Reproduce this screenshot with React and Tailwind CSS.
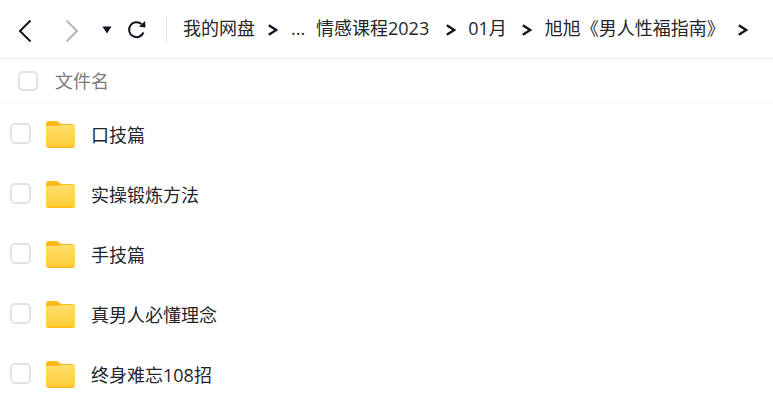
const font = { fontFamily: '"Open Sans", "Noto Sans CJK SC", sans-serif' };

function Chevron() {
  return (
    <svg width="10" height="12" viewBox="0 0 10 12" className="shrink-0 mt-[2px]" fill="none">
      <path d="M0.8 1.2 L8.2 6 L0.8 10.8" stroke="#11131f" strokeWidth="2.3" />
    </svg>
  );
}

function Folder() {
  return (
    <svg width="29" height="27" viewBox="0 0 29 27" className="shrink-0">
      <defs>
        <linearGradient id="fg" x1="0" y1="0" x2="0" y2="1">
          <stop offset="0" stopColor="#ffe06e" />
          <stop offset="1" stopColor="#ffcd38" />
        </linearGradient>
      </defs>
      <path d="M0 3 Q0 0 3 0 H10 Q12 0 13.5 1.5 L15 3 H26 Q29 3 29 6 V24 Q29 27 26 27 H3 Q0 27 0 24 Z" fill="#ffbb1c" />
      <path d="M0 6.5 Q0 5 2 5 H13 L15 4 H27 Q29 4 29 6.5 V23.5 Q29 25.5 27 25.5 H2 Q0 25.5 0 23.5 Z" fill="url(#fg)" />
    </svg>
  );
}

function Crumb({ children }) {
  return <span className="shrink-0 text-[18px] leading-[28px] text-[#25262b] whitespace-nowrap relative -top-px">{children}</span>;
}

const rows = ["口技篇", "实操锻炼方法", "手技篇", "真男人必懂理念", "终身难忘108招"];

export default function App() {
  return (
    <div className="w-[773px] h-[413px] overflow-hidden bg-white" style={font}>
      <div className="h-[59px] flex items-center border-b border-[#f0f0f0]">
        <div className="w-[167px] shrink-0 flex items-center h-[27px] border-r border-[#e6e6e6] pl-[18px]">
          <svg width="14" height="24" viewBox="0 0 14 24" fill="none" className="shrink-0 mt-[3px]">
            <path d="M12.5 1.5 L2 12 L12.5 22.5" stroke="#11131f" strokeWidth="2" />
          </svg>
          <svg width="14" height="24" viewBox="0 0 14 24" fill="none" className="shrink-0 ml-[33px] mt-[3px]">
            <path d="M1.5 1.5 L12 12 L1.5 22.5" stroke="#b5b5b5" strokeWidth="2" />
          </svg>
          <svg width="10" height="8" viewBox="0 0 10 8" className="shrink-0 ml-[23px] mt-[2px]">
            <path d="M0.5 0.5 H9.5 L5 7.5 Z" fill="#11131f" />
          </svg>
          <svg width="20" height="20" viewBox="0 0 20 20" fill="none" className="shrink-0 ml-[15px] mt-[1px]">
            <path d="M16.5 12.5 A7.5 7.5 0 1 1 14.5 4" stroke="#11131f" strokeWidth="2" />
            <path d="M12 6.8 L18.5 7.5 L18 1 Z" fill="#11131f" />
          </svg>
        </div>
        <div className="flex items-center pl-[16px]">
          <Crumb>我的网盘</Crumb>
          <div className="ml-[13px] flex"><Chevron /></div>
          <Crumb><span className="ml-[13px] inline-block w-[25px]">...</span></Crumb>
          <Crumb>情感课程2023</Crumb>
          <div className="ml-[17px] flex"><Chevron /></div>
          <div className="ml-[12px]"><Crumb>01月</Crumb></div>
          <div className="ml-[15px] flex"><Chevron /></div>
          <div className="ml-[13px]"><Crumb>旭旭《男人性福指南》</Crumb></div>
          <div className="ml-[13px] flex"><Chevron /></div>
        </div>
      </div>
      <div className="h-[44px] flex items-center border-b border-[#f5f5f5] pl-[18px]">
        <div className="w-[20px] h-[20px] rounded-[5px] border-2 border-[#e2e2e2]" />
        <span className="ml-[17px] text-[18px] text-[#7a7a7a] relative top-px">文件名</span>
      </div>
      <div className="flex flex-col">
        {rows.map((r) => (
          <div key={r} className="h-[60px] flex items-center pl-[10px]">
            <div className="w-[21px] h-[21px] rounded-[5px] border-2 border-[#e2e2e2] shrink-0 mt-[1px]" />
            <div className="ml-[15px] flex mt-[3px]"><Folder /></div>
            <span className="ml-[16px] text-[18px] text-[#25262b] whitespace-nowrap relative top-[2px]">{r}</span>
          </div>
        ))}
      </div>
    </div>
  );
}
